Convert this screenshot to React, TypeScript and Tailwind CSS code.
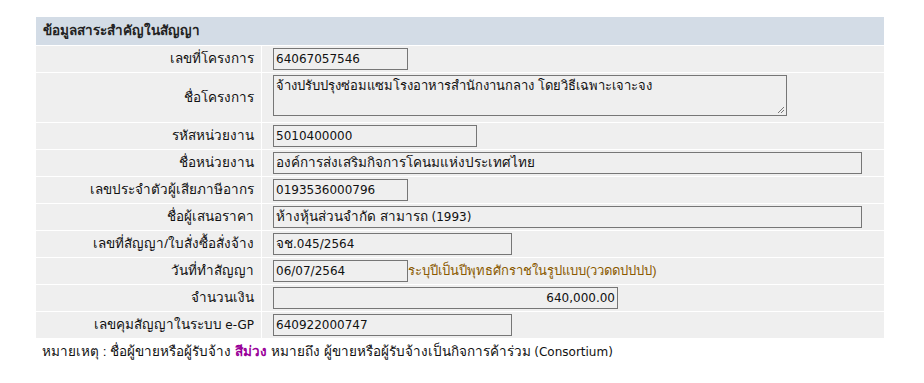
const L = ({ children }: { children: React.ReactNode }) => (
  <span className="font-['DejaVu_Sans'] text-[12px]">{children}</span>
);

const rows: { label: React.ReactNode; value: React.ReactNode; w: string; extra?: string; right?: boolean }[] = [
  { label: "เลขที่โครงการ", value: <L>64067057546</L>, w: "w-[135px]" },
  { label: "รหัสหน่วยงาน", value: <L>5010400000</L>, w: "w-[204px]" },
  { label: "ชื่อหน่วยงาน", value: "องค์การส่งเสริมกิจการโคนมแห่งประเทศไทย", w: "w-[589px]" },
  { label: "เลขประจำตัวผู้เสียภาษีอากร", value: <L>0193536000796</L>, w: "w-[135px]" },
  {
    label: "ชื่อผู้เสนอราคา",
    value: (
      <>
        ห้างหุ้นส่วนจำกัด สามารถ <L>(1993)</L>
      </>
    ),
    w: "w-[589px]",
  },
  {
    label: "เลขที่สัญญา/ใบสั่งซื้อสั่งจ้าง",
    value: (
      <>
        จช<L>.045/2564</L>
      </>
    ),
    w: "w-[239px]",
  },
  {
    label: "วันที่ทำสัญญา",
    value: <L>06/07/2564</L>,
    w: "w-[135px]",
    extra: "ระบุปีเป็นปีพุทธศักราชในรูปแบบ(ววดดปปปป)",
  },
  { label: "จำนวนเงิน", value: <L>640,000.00</L>, w: "w-[345px]", right: true },
  {
    label: (
      <>
        เลขคุมสัญญาในระบบ&nbsp;<L>e-GP</L>
      </>
    ),
    value: <L>640922000747</L>,
    w: "w-[239px]",
  },
];

const Field = ({ value, w, right }: { value: React.ReactNode; w: string; right?: boolean }) => (
  <div
    className={`flex h-[22px] items-center border border-[#767676] px-[2px] ${w} ${
      right ? "justify-end" : ""
    }`}
  >
    <span className="whitespace-nowrap">{value}</span>
  </div>
);

const Row = ({ label, children, tall }: { label: React.ReactNode; children: React.ReactNode; tall?: boolean }) => (
  <div className={`flex gap-px ${tall ? "h-[49px]" : "h-[26px]"}`}>
    <div className="flex w-[225px] items-center justify-end whitespace-nowrap bg-[#efefef] pr-[7px]">{label}</div>
    <div className={`flex flex-1 bg-[#efefef] pl-[11px] ${tall ? "items-start pt-[2px]" : "items-center"}`}>
      {children}
    </div>
  </div>
);

export default function App() {
  const [first, ...rest] = rows;
  return (
    <div
      className="min-h-[383px] bg-white pl-[36px] pt-[17px] text-[13.5px] leading-[18px] text-[#111]"
      style={{ fontFamily: "Tahoma, 'Liberation Sans', 'Noto Sans', sans-serif" }}
    >
      <div className="flex w-[848px] flex-col gap-px bg-white">
        <div className="flex h-[28px] items-center bg-[#d3dce6] pl-[7px] font-bold text-[#222]">
          ข้อมูลสาระสำคัญในสัญญา
        </div>
        <Row label={first.label}>
          <Field value={first.value} w={first.w} />
        </Row>
        <Row label="ชื่อโครงการ" tall>
          <div className="relative h-[41px] w-[514px] border border-[#767676] px-[2px] pt-[1px] text-[13px]">
            จ้างปรับปรุงซ่อมแซมโรงอาหารสำนักงานกลาง โดยวิธีเฉพาะเจาะจง
            <svg className="absolute bottom-[1px] right-[1px]" width="8" height="8" viewBox="0 0 8 8">
              <path d="M7 1 L1 7 M7 4 L4 7" stroke="#777" strokeWidth="1" fill="none" />
            </svg>
          </div>
        </Row>
        {rest.map((r, i) => (
          <Row key={i} label={r.label}>
            <Field value={r.value} w={r.w} right={r.right} />
            {r.extra && <span className="whitespace-nowrap text-[13px] text-[#8a5a00]">{r.extra}</span>}
          </Row>
        ))}
      </div>
      <p className="mt-[5px] whitespace-nowrap pl-[6px]">
        หมายเหตุ : ชื่อผู้ขายหรือผู้รับจ้าง <span className="font-bold text-[#990099]">สีม่วง</span> หมายถึง
        ผู้ขายหรือผู้รับจ้างเป็นกิจการค้าร่วม <L>(Consortium)</L>
      </p>
    </div>
  );
}
